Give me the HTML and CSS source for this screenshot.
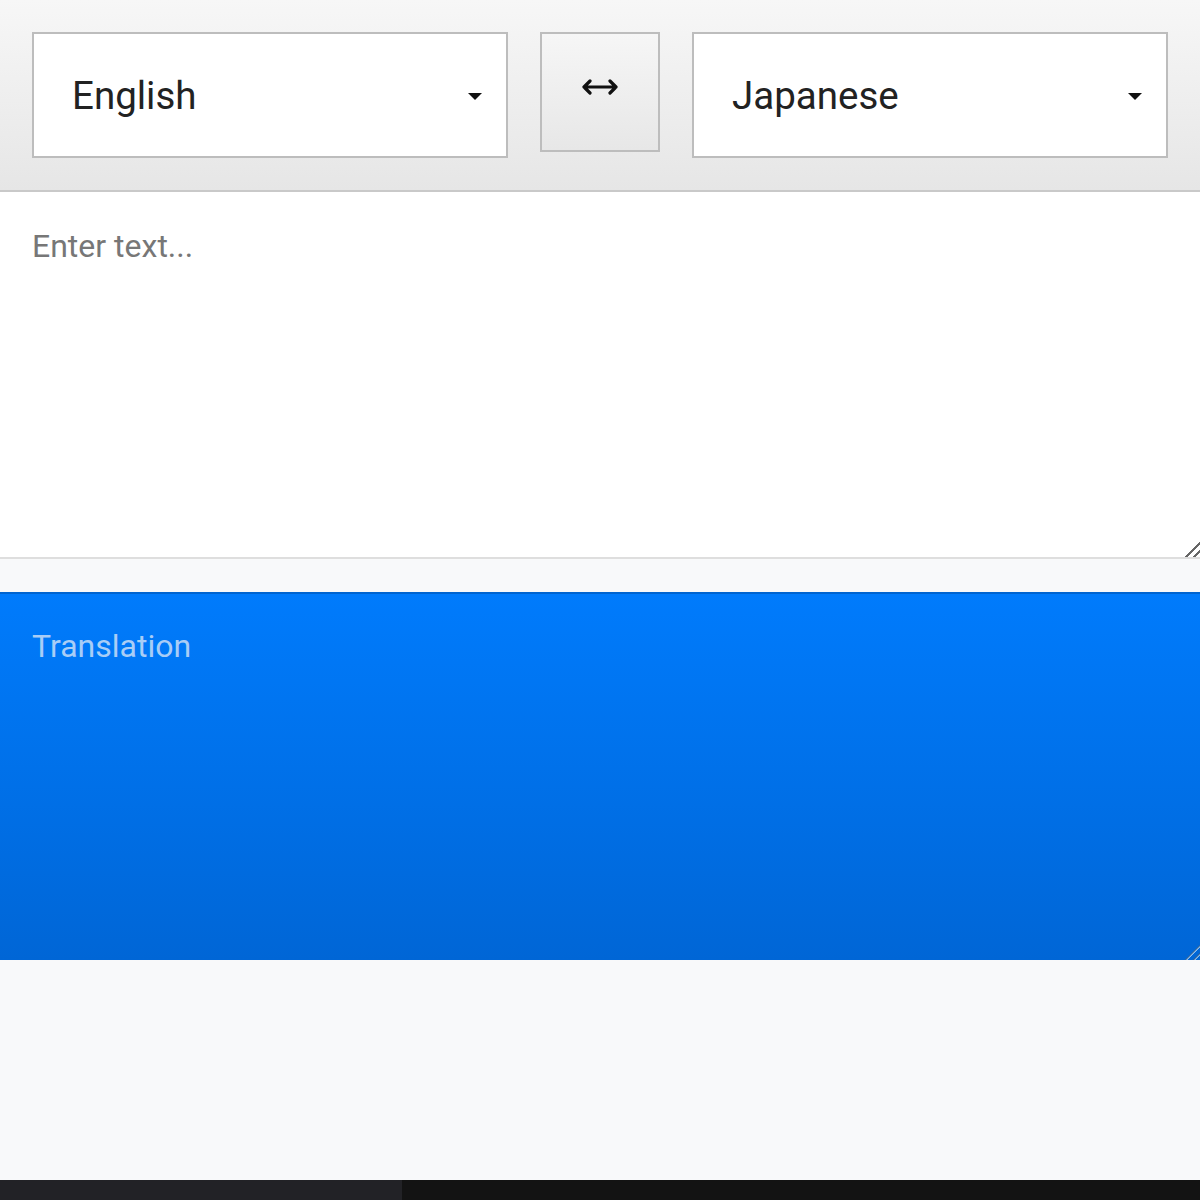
FILE: index.html
```html
<!DOCTYPE html>
<html lang="en">
<head>
  <meta charset="UTF-8" />
  <meta name="viewport" content="width=device-width, initial-scale=1.0">
  <title>Translate</title>
  <link rel="stylesheet" href="styles.css">
</head>
<body>
  <div class="toolbar">
    <div class="lang-select">
      <span>English</span>
      <i class="caret"></i>
    </div>
    <button class="swap-btn">
      <svg width="36" height="16" viewBox="0 0 36 16"><path d="M8 2 L2 8 L8 14 M2 8 H34 M28 2 L34 8 L28 14" fill="none" stroke="#111" stroke-width="3.2" stroke-linecap="round" stroke-linejoin="round"/></svg>
    </button>
    <div class="lang-select">
      <span>Japanese</span>
      <i class="caret"></i>
    </div>
  </div>

  <textarea class="source" placeholder="Enter text..."></textarea>
  <div class="spacer"></div>
  <textarea class="result" placeholder="Translation" readonly></textarea>

  <div class="filler"></div>
  <div class="dock">
    <div class="dock-left"></div>
    <div class="dock-right"></div>
  </div>
</body>
</html>
```

FILE: styles.css
```css
body, html {
  margin: 0; padding: 0;
  font-family: Roboto, "Noto Sans", sans-serif;
  background: #f8f9fa;
}
.toolbar {
  height: 192px;
  box-sizing: border-box;
  padding: 32px;
  display: flex;
  align-items: flex-start;
  gap: 32px;
  background: linear-gradient(#f7f7f7, #e6e6e6);
  border-bottom: 2px solid #c9c9c9;
}
.lang-select {
  flex: 1;
  height: 126px;
  box-sizing: border-box;
  background: white;
  border: 2px solid #bdbdbd;
  display: flex;
  align-items: center;
  justify-content: space-between;
  padding: 0 24px 0 38px;
  font-size: 38.5px;
  color: #222;
}
.caret {
  width: 0; height: 0;
  margin-top: 2px;
  border-left: 7.5px solid transparent;
  border-right: 7.5px solid transparent;
  border-top: 7px solid #111;
}
.swap-btn {
  width: 120px;
  height: 120px;
  flex: none;
  border: 2px solid #bdbdbd;
  background: linear-gradient(#f6f6f6, #e7e7e7);
  display: flex;
  align-items: center;
  justify-content: center;
  padding: 0 0 11px;
}
textarea {
  display: block;
  width: 100%;
  box-sizing: border-box;
  margin: 0;
  border: none;
  outline: none;
  resize: vertical;
  font-family: Roboto, "Noto Sans", sans-serif;
  font-size: 32px;
  padding: 32px;
}
textarea::-webkit-resizer {
  background:
    linear-gradient(135deg, transparent 47%, #666 47%, #666 57%, transparent 57%, transparent 74%, #666 74%, #666 84%, transparent 84%);
}
.source {
  height: 367px;
  padding-top: 35px;
  background: white;
  border-bottom: 2px solid #dedede;
}
.source::placeholder {
  color: #777;
}
.spacer {
  height: 33px;
}
.result {
  height: 368px;
  padding-top: 33px;
  border-top: 2px solid #0064d0;
  background: linear-gradient(#007bfc, #0066d6);
}
.result::-webkit-resizer {
  background:
    linear-gradient(135deg, transparent 47%, #0b3d78 47%, #8ec2f5 57%, transparent 57%, transparent 74%, #0b3d78 74%, #8ec2f5 84%, transparent 84%);
}
.result::placeholder {
  color: #a9cdf6;
}
.filler {
  height: 220px;
}
.dock {
  display: flex;
  height: 20px;
}
.dock-left {
  width: 402px;
  background: #222226;
}
.dock-right {
  flex: 1;
  background: #131313;
}
```
